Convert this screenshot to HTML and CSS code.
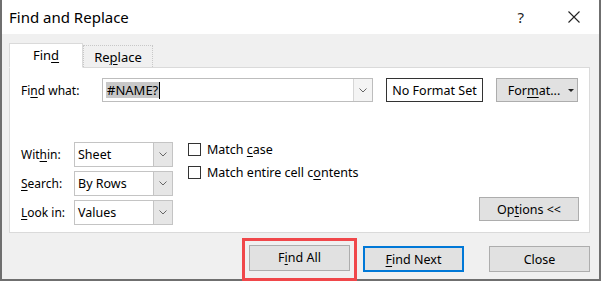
FILE: index.html
```html
<!DOCTYPE html>
<html lang="en">
<head>
    <meta charset="UTF-8">
    <title>Find and Replace</title>
    <link rel="stylesheet" href="styles.css">
</head>
<body>
    <div class="window">
        <div class="titlebar">
            <span class="title">Find and Replace</span>
            <span class="help">?</span>
            <svg class="close-x" width="12" height="12" viewBox="0 0 12 12">
                <path d="M0.5 0.5 L11.5 11.5 M11.5 0.5 L0.5 11.5" stroke="#222" stroke-width="1.1" fill="none"/>
            </svg>
        </div>

        <div class="content">
            <div class="tabs">
                <div class="tab active"><span>Fin<u>d</u></span></div>
                <div class="tab"><span>Re<u>p</u>lace</span></div>
            </div>

            <div class="panel">
                <div class="find-row">
                    <label class="find-label">Fi<u>n</u>d what:</label>
                    <div class="combo">
                        <span class="combo-text"><span class="selected">#NAME?</span><span class="caret"></span></span>
                        <span class="combo-arrow">
                            <svg width="8" height="5" viewBox="0 0 8 5"><path d="M0.5 0.5 L4 4 L7.5 0.5" stroke="#666" fill="none"/></svg>
                        </span>
                    </div>
                    <div class="format-preview">No Format Set</div>
                    <button class="btn format-btn"><span>For<u>m</u>at...</span><span class="tri"></span></button>
                </div>

                <div class="options">
                    <div class="selects">
                        <div class="opt-row">
                            <label class="opt-label">Wit<u>h</u>in:</label>
                            <div class="select">
                                <span class="select-text">Sheet</span>
                                <span class="select-arrow"><svg width="8" height="5" viewBox="0 0 8 5"><path d="M0.5 0.5 L4 4 L7.5 0.5" stroke="#666" fill="none"/></svg></span>
                            </div>
                        </div>
                        <div class="opt-row">
                            <label class="opt-label"><u>S</u>earch:</label>
                            <div class="select">
                                <span class="select-text">By Rows</span>
                                <span class="select-arrow"><svg width="8" height="5" viewBox="0 0 8 5"><path d="M0.5 0.5 L4 4 L7.5 0.5" stroke="#666" fill="none"/></svg></span>
                            </div>
                        </div>
                        <div class="opt-row">
                            <label class="opt-label"><u>L</u>ook in:</label>
                            <div class="select">
                                <span class="select-text">Values</span>
                                <span class="select-arrow"><svg width="8" height="5" viewBox="0 0 8 5"><path d="M0.5 0.5 L4 4 L7.5 0.5" stroke="#666" fill="none"/></svg></span>
                            </div>
                        </div>
                    </div>

                    <div class="checks">
                        <label class="check"><span class="box"></span><span>Match <u>c</u>ase</span></label>
                        <label class="check"><span class="box"></span><span>Match entire cell c<u>o</u>ntents</span></label>
                    </div>

                    <button class="btn options-btn">Op<u>t</u>ions &lt;&lt;</button>
                </div>
            </div>

            <div class="actions">
                <div class="highlight">
                    <button class="btn action-btn">F<u>i</u>nd All</button>
                </div>
                <button class="btn action-btn default"><u>F</u>ind Next</button>
                <button class="btn action-btn close-btn">Close</button>
            </div>
        </div>
    </div>
</body>
</html>
```

FILE: styles.css
```css
html, body {
    margin: 0;
    padding: 0;
}

body {
    font-family: 'Segoe UI', 'Noto Sans', 'Open Sans', sans-serif;
    font-size: 12px;
    color: #000;
    background: #fff;
}

u {
    text-decoration-thickness: 1px;
    text-underline-offset: 2px;
}

.window {
    width: 601px;
    height: 281px;
    box-sizing: border-box;
    border: 2px solid #6f6f6f;
    border-top: none;
    background: #f0f0f0;
    display: flex;
    flex-direction: column;
}

/* Title bar */
.titlebar {
    height: 34px;
    background: #fff;
    display: flex;
    align-items: center;
    padding-left: 7px;
    flex-shrink: 0;
}

.title {
    font-size: 15px;
    flex: 1;
}

.help {
    font-size: 15px;
    color: #222;
    margin-right: 44px;
}

.close-x {
    margin-right: 19px;
}

.content {
    padding: 8px 9px 0 7px;
    display: flex;
    flex-direction: column;
}

/* Tabs */
.tabs {
    display: flex;
    align-items: flex-end;
    height: 25px;
    position: relative;
    z-index: 1;
}

.tab {
    height: 22px;
    width: 70px;
    display: flex;
    align-items: center;
    justify-content: center;
    border: 1px dotted #c8c8c8;
    border-bottom: none;
    background: #f0f0f0;
    box-sizing: border-box;
    font-size: 13px;
}

.tab.active {
    width: 74px;
    height: 25px;
    background: #fff;
    border: 1px solid #dadada;
    border-bottom: 1px solid #fff;
    margin-bottom: -1px;
    padding-bottom: 1px;
}

/* Panel */
.panel {
    background: #fff;
    border: 1px solid #dadada;
    height: 166px;
    box-sizing: border-box;
    padding: 10px 9px 0 11px;
    display: flex;
    flex-direction: column;
}

.find-row {
    display: flex;
    align-items: center;
    height: 24px;
}

.find-label {
    width: 81px;
    font-size: 12px;
}

.combo {
    width: 271px;
    height: 24px;
    box-sizing: border-box;
    border: 1px solid #bdbdbd;
    display: flex;
}

.combo-text {
    flex: 1;
    display: flex;
    align-items: center;
    padding-left: 3px;
    font-size: 13px;
}

.selected {
    background: #c8c8c8;
    padding: 0 1px;
    line-height: 16px;
}

.caret {
    width: 1px;
    height: 17px;
    background: #000;
}

.combo-arrow {
    width: 18px;
    display: flex;
    align-items: center;
    justify-content: center;
    border-left: 1px solid #d6d6d6;
    background: #f4f4f4;
}

.format-preview {
    margin-left: 13px;
    width: 97px;
    height: 24px;
    box-sizing: border-box;
    border: 1px solid #333;
    display: flex;
    align-items: center;
    justify-content: center;
    font-size: 12.5px;
}

.btn {
    font-family: inherit;
    font-size: 12.5px;
    background: #e1e1e1;
    border: 1px solid #adadad;
    color: #000;
    padding: 0;
    box-sizing: border-box;
}

.format-btn {
    margin-left: 13px;
    width: 82px;
    height: 24px;
    display: flex;
    align-items: center;
    justify-content: center;
    gap: 8px;
    padding-left: 8px;
}

.tri {
    width: 0;
    height: 0;
    border-left: 3px solid transparent;
    border-right: 3px solid transparent;
    border-top: 3px solid #222;
}

/* Options */
.options {
    margin-top: 40px;
    display: flex;
    align-items: flex-start;
}

.selects {
    display: flex;
    flex-direction: column;
    gap: 4px;
}

.opt-row {
    display: flex;
    align-items: center;
}

.opt-label {
    width: 53px;
}

.select {
    width: 99px;
    height: 25px;
    box-sizing: border-box;
    border: 1px solid #c4c4c4;
    display: flex;
}

.select-text {
    flex: 1;
    display: flex;
    align-items: center;
    padding-left: 3px;
    font-size: 12.5px;
}

.select-arrow {
    width: 18px;
    display: flex;
    align-items: center;
    justify-content: center;
    border-left: 1px solid #c4c4c4;
    background: #e6e6e6;
}

.checks {
    margin-left: 15px;
    margin-top: 1px;
    display: flex;
    flex-direction: column;
    gap: 10px;
}

.check {
    display: flex;
    align-items: center;
    height: 13px;
    font-size: 12.5px;
}

.box {
    width: 13px;
    height: 13px;
    box-sizing: border-box;
    border: 1px solid #333;
    margin-right: 6px;
}

.options-btn {
    margin-left: auto;
    margin-top: 55px;
    width: 100px;
    height: 24px;
    margin-right: 1px;
}

/* Bottom buttons */
.actions {
    display: flex;
    justify-content: flex-end;
    align-items: center;
    margin-top: 5px;
    height: 42px;
}

.highlight {
    border: 3px solid #f0474a;
    padding: 4px 4px 7px 4px;
    margin-right: 6px;
}

.action-btn {
    width: 101px;
    height: 26px;
}

.action-btn.default {
    border: 2px solid #0078d7;
}

.close-btn {
    margin-left: 25px;
}
```
